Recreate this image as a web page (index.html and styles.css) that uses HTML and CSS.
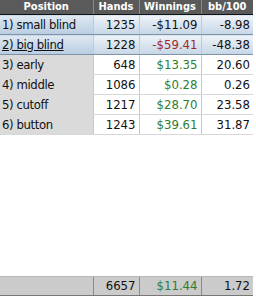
FILE: index.html
```html
<!DOCTYPE html>
<html>
<head>
<meta charset="utf-8">
<link rel="stylesheet" href="styles.css">
</head>
<body>
<div class="page">
  <table class="grid">
    <colgroup>
      <col class="c1"><col class="c2"><col class="c3"><col class="c4">
    </colgroup>
    <thead>
      <tr><th>Position</th><th>Hands</th><th>Winnings</th><th>bb/100</th></tr>
    </thead>
    <tbody>
      <tr class="sel"><td class="name">1) small blind</td><td>1235</td><td>-$11.09</td><td>-8.98</td></tr>
      <tr class="sel"><td class="name"><u>2) big blind</u></td><td>1228</td><td class="neg">-$59.41</td><td>-48.38</td></tr>
      <tr><td class="name">3) early</td><td>648</td><td class="pos">$13.35</td><td>20.60</td></tr>
      <tr><td class="name">4) middle</td><td>1086</td><td class="pos">$0.28</td><td>0.26</td></tr>
      <tr><td class="name">5) cutoff</td><td>1217</td><td class="pos">$28.70</td><td>23.58</td></tr>
      <tr><td class="name">6) button</td><td>1243</td><td class="pos">$39.61</td><td>31.87</td></tr>
    </tbody>
  </table>
  <div class="spacer"></div>
  <table class="grid foot">
    <colgroup>
      <col class="c1"><col class="c2"><col class="c3"><col class="c4">
    </colgroup>
    <tbody>
      <tr><td></td><td>6657</td><td class="pos">$11.44</td><td>1.72</td></tr>
    </tbody>
  </table>
</div>
</body>
</html>
```
FILE: styles.css
```css
html, body {
  margin: 0;
  padding: 0;
  background: #ffffff;
}
.page {
  width: 256px;
  height: 301px;
  display: flex;
  flex-direction: column;
  font-family: "DejaVu Sans Condensed", "DejaVu Sans", sans-serif;
  font-size: 13px;
  color: #111;
}
.grid {
  border-collapse: collapse;
  table-layout: fixed;
  width: 253px;
}
.c1 { width: 93px; }
.c2 { width: 46px; }
.c3 { width: 62px; }
.c4 { width: 52px; }
.grid th {
  height: 14px;
  padding: 0;
  background: #5a5a5a;
  color: #fff;
  font-size: 11px;
  font-weight: bold;
  text-align: center;
  border-left: 1px solid #8a8a8a;
  border-bottom: 1px solid #111;
  line-height: 14px;
}
.grid th:first-child { border-left: none; }
.grid td {
  height: 19px;
  padding: 0 3px 0 2px;
  text-align: right;
  border-left: 1px solid #c8c8c8;
  border-bottom: 1px solid #d8d8d8;
  background: #fff;
  white-space: nowrap;
  line-height: 19px;
}
.grid td.name {
  text-align: left;
  border-left: none;
  background: #dadada;
  padding-left: 2px;
  letter-spacing: -0.4px;
}
.grid tr.sel td {
  background: linear-gradient(to bottom, #eef3f8, #c6d6e6);
  border-bottom: 1px solid #7f93a8;
}
.grid tr.sel td.name {
  background: linear-gradient(to bottom, #dfe8f2, #b9cde0);
}
.pos { color: #2f7d2f; }
.neg { color: #a02828; }
.spacer { flex: 1; }
.foot {
  margin-bottom: 5px;
}
.foot td {
  height: 18px;
  line-height: 18px;
  background: #cbcbcb;
  border-left: 1px solid #8a8a8a;
  border-top: 1px solid #b8b8b8;
  border-bottom: 1px solid #777;
}
.foot td:first-child { border-left: none; }
```
